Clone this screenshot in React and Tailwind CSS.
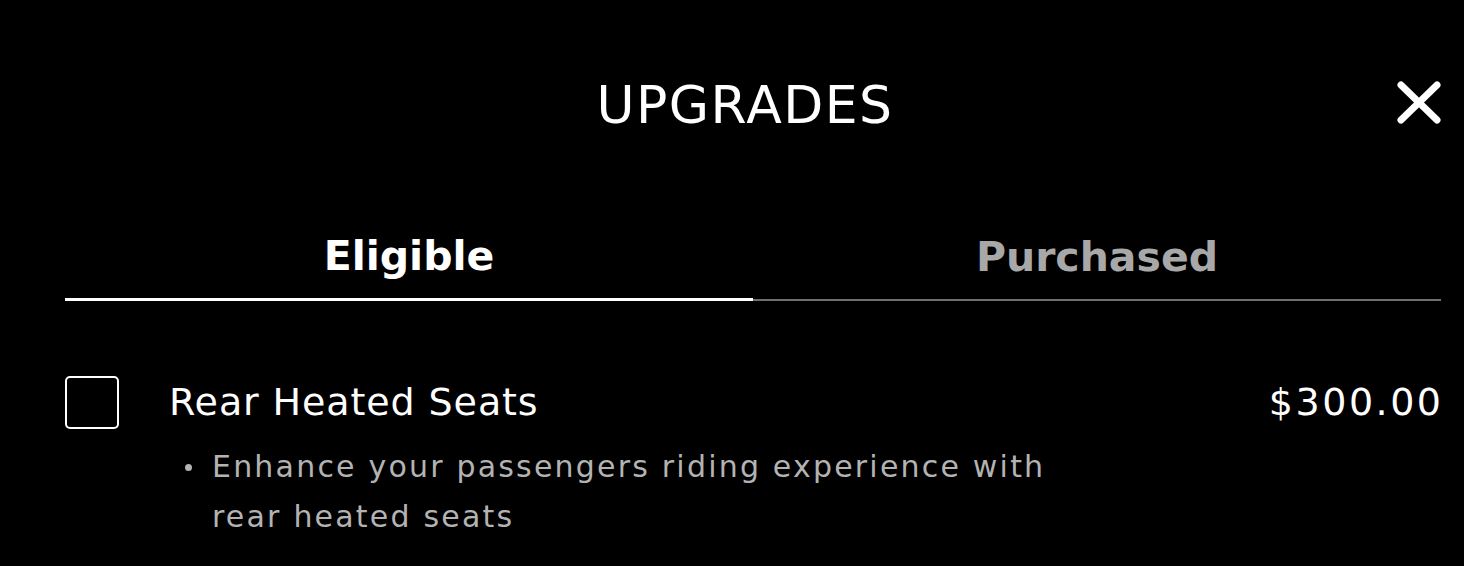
export default function App() {
  return (
    <div className="w-[1464px] h-[566px] bg-black text-white overflow-hidden font-['DejaVu_Sans',sans-serif]">
      {/* Header */}
      <div className="relative flex justify-center pt-[75px] pl-[26px]">
        <h1 className="text-[52px] leading-[60px] font-normal tracking-[1.5px]">UPGRADES</h1>
        <button className="absolute right-[23px] top-[81px] text-white">
          <svg width="44" height="43" viewBox="0 0 44 43" fill="none" stroke="currentColor" strokeWidth="7" strokeLinecap="round">
            <path d="M4 4 40 39" />
            <path d="M40 4 4 39" />
          </svg>
        </button>
      </div>

      {/* Tabs */}
      <div className="ml-[65px] mr-[23px] mt-[96px] grid grid-cols-2 items-end">
        <div className="flex flex-col items-center">
          <span className="text-[41px] leading-[50px] font-bold text-white pb-[17px]">Eligible</span>
          <div className="h-[3px] w-full bg-white" />
        </div>
        <div className="flex flex-col items-center">
          <span className="text-[41px] leading-[50px] font-bold text-[#a8a8a8] pb-[17px]">Purchased</span>
          <div className="h-[2px] w-full bg-[#6e6e6e]" />
        </div>
      </div>

      {/* Item */}
      <div className="ml-[65px] mr-[23px] mt-[75px] flex">
        <div className="w-[54px] h-[53px] border-[2.5px] border-white rounded-[5px] shrink-0" />
        <div className="ml-[50px] flex-1">
          <div className="flex justify-between h-[53px]">
            <span className="text-[38px] leading-[53px] tracking-[0.9px]">Rear Heated Seats</span>
            <span className="text-[38px] leading-[53px] tracking-[2.5px] -mr-[2.5px]">$300.00</span>
          </div>
          <ul className="mt-[13px] ml-[16px] text-[30px] leading-[50px] tracking-[2.2px] text-[#b3b3b3]">
            <li className="flex">
              <div className="h-[50px] flex items-center shrink-0 mr-[20px]">
                <div className="w-[7px] h-[7px] rounded-full bg-[#b3b3b3]" />
              </div>
              <span className="max-w-[870px]">Enhance your passengers riding experience with rear heated seats</span>
            </li>
          </ul>
        </div>
      </div>
    </div>
  );
}
